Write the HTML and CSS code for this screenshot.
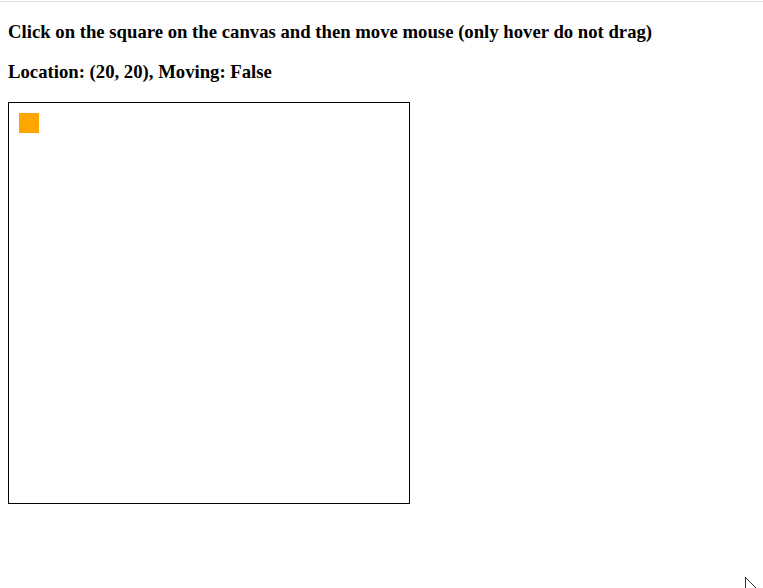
FILE: index.html
```html
<!DOCTYPE html>
<html>
<head>
<meta charset="utf-8">
<link rel="stylesheet" href="styles.css">
</head>
<body>
<div class="topline"></div>
<main class="page">
  <h3 class="title">Click on the square on the canvas and then move mouse (only hover do not drag)</h3>
  <h3 class="title">Location: (20, 20), Moving: False</h3>
  <div class="canvas">
    <div class="square"></div>
  </div>
</main>
<svg class="cursor" width="14" height="12" viewBox="0 0 14 12">
  <path d="M0.5 0 V12 M0.5 0.5 L11 11" stroke="#333" stroke-width="1" fill="none"/>
</svg>
</body>
</html>
```
FILE: styles.css
```css
html, body {
  margin: 0;
  padding: 0;
  background: #fff;
}
body {
  font-family: "Liberation Serif", "Times New Roman", serif;
  color: #000;
  overflow: hidden;
  height: 588px;
  position: relative;
}
.topline {
  height: 1px;
  margin-top: 1px;
  background: #e0e0e0;
}
.page {
  padding: 0 8px;
  display: flow-root;
}
.title {
  font-size: 18.72px;
  font-weight: bold;
  margin: 18.72px 0;
}
.canvas {
  border: 1px solid #000;
  margin-top: 19px;
  padding: 10px;
  box-sizing: border-box;
  width: 402px;
  height: 402px;
}
.square {
  width: 20px;
  height: 20px;
  background: #ffa500;
}
.cursor {
  position: absolute;
  left: 745px;
  top: 577px;
}
```
